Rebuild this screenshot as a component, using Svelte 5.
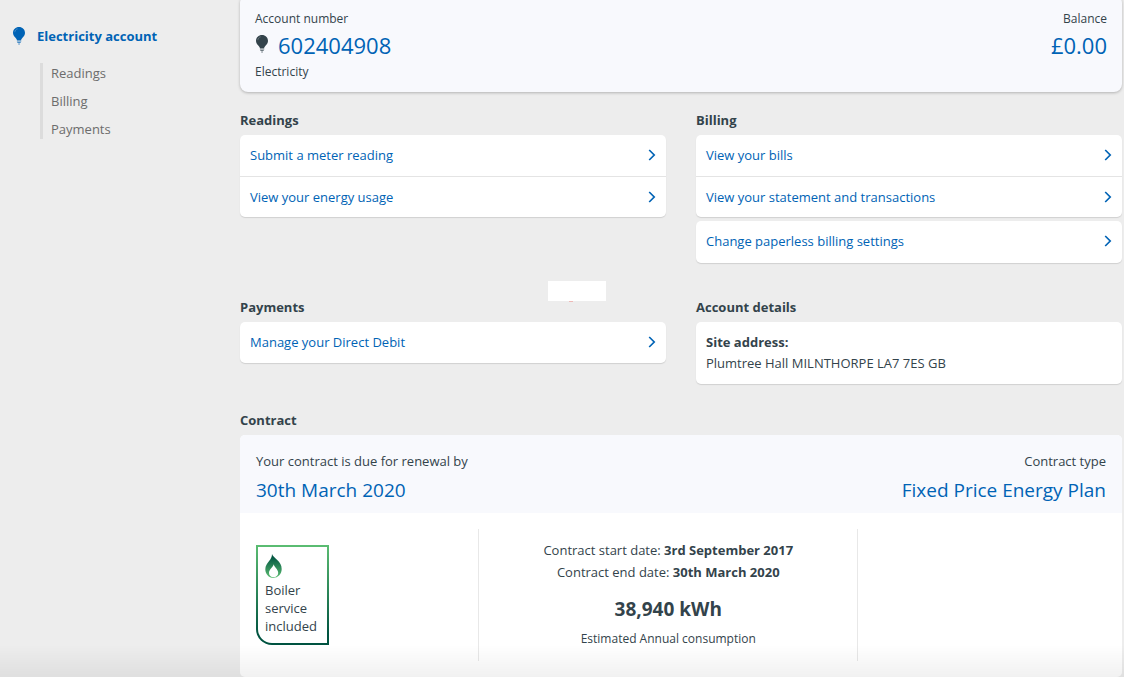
<script>
  const menu = ['Readings', 'Billing', 'Payments'];
</script>

{#snippet bulb()}
  <svg class="bulb" viewBox="0 0 12 18" width="12" height="18" aria-hidden="true">
    <path d="M6 0C2.600 0 0 2.500 0 6c0 2.400 1.600 3.700 2.900 5.200.6.700.9 1.300 1.100 2h4c.2-.7.5-1.300 1.100-2C10.400 9.700 12 8.400 12 6 12 2.500 9.400 0 6 0z" fill="currentColor" />
    <path d="M3.900 14h4.400M4.300 15.500h3.400M5.200 17h1.700" stroke="currentColor" stroke-width="1.100" opacity=".7" />
    <path d="M1.800 5.200C1.900 3.400 3 2.200 4.700 1.800" fill="none" stroke="#fff" stroke-width=".6" opacity=".4" />
  </svg>
{/snippet}

{#snippet row(label)}
  <a class="row" href="#top">
    <span>{label}</span>
    <svg viewBox="0 0 8 12" width="8" height="12" aria-hidden="true">
      <path d="M1.200 1l5 5-5 5" fill="none" stroke="currentColor" stroke-width="1.700" />
    </svg>
  </a>
{/snippet}

<div class="page">
  <nav class="side">
    <a class="account" href="#top">{@render bulb()}<span>Electricity account</span></a>
    <div class="menu">
      {#each menu as item}
        <a href="#top">{item}</a>
      {/each}
    </div>
  </nav>

  <main>
    <section class="summary">
      <div>
        <p class="small">Account number</p>
        <p class="number">{@render bulb()}<a href="#top">602404908</a></p>
        <p class="small">Electricity</p>
      </div>
      <div class="right">
        <p class="small">Balance</p>
        <p class="number">£0.00</p>
      </div>
    </section>

    <div class="columns">
      <section>
        <h2>Readings</h2>
        <div class="list">
          {@render row('Submit a meter reading')}
          {@render row('View your energy usage')}
        </div>
      </section>
      <section>
        <h2>Billing</h2>
        <div class="list">
          {@render row('View your bills')}
          {@render row('View your statement and transactions')}
        </div>
        <div class="list extra">
          {@render row('Change paperless billing settings')}
        </div>
      </section>
      <section class="payments">
        <h2>Payments</h2>
        <div class="list">
          {@render row('Manage your Direct Debit')}
        </div>
        <div class="patch"></div>
      </section>
      <section>
        <h2>Account details</h2>
        <div class="list details">
          <strong>Site address:</strong>
          <p>Plumtree Hall MILNTHORPE LA7 7ES GB</p>
        </div>
      </section>
    </div>

    <section class="contract">
      <h2>Contract</h2>
      <div class="card">
        <header>
          <div>
            <p>Your contract is due for renewal by</p>
            <p class="value">30th March 2020</p>
          </div>
          <div class="right">
            <p>Contract type</p>
            <p class="value">Fixed Price Energy Plan</p>
          </div>
        </header>
        <div class="body">
          <div class="cell">
            <div class="badge">
              <svg viewBox="0 0 18 24" width="18" height="24" aria-hidden="true">
                <defs>
                  <linearGradient id="flame" x1="0" y1="0" x2="0" y2="1">
                    <stop offset="0.100" stop-color="#005340" />
                    <stop offset="1" stop-color="#5bbd72" />
                  </linearGradient>
                </defs>
                <path fill="url(#flame)" fill-rule="evenodd" d="M7 0c.6 2 2.800 3.700 5 5.800 2.900 2.800 4.700 5.300 4.700 9.200 0 5-3.600 8.800-8.300 8.800S.300 20 .300 15.200c0-3.700 1.900-5.800 4-8.500C6 4.600 7 2.700 7 0zM8.700 10.200c-.4 2.500-4.700 5-4.700 8.700 0 2.600 2 4.200 4.500 4.200s4.700-1.600 4.700-4.200c0-3.700-4.100-6.200-4.500-8.700z" />
              </svg>
              <span>Boiler service included</span>
            </div>
          </div>
          <div class="cell middle">
            <p>Contract start date: <strong>3rd September 2017</strong></p>
            <p>Contract end date: <strong>30th March 2020</strong></p>
            <p class="usage">38,940 kWh</p>
            <p class="small">Estimated Annual consumption</p>
          </div>
          <div class="cell"></div>
        </div>
      </div>
    </section>
  </main>
  <div class="fade"></div>
</div>

<style>
  :global(body) {
    background: #ededed;
    overflow: hidden;
  }
  .page {
    display: flex;
    font: 13px/22px 'Open Sans', 'Noto Sans', sans-serif;
    color: #33434b;
  }
  p, h2 { margin: 0; }
  a { color: #0063b5; text-decoration: none; }
  strong { font-weight: 700; }
  .side {
    flex: 0 0 240px;
    box-sizing: border-box;
    padding: 25px 12px;
  }
  .account {
    display: flex;
    gap: 12px;
    font-weight: 700;
  }
  .account .bulb { margin-left: 1px; margin-top: 2px; }
  .menu {
    display: grid;
    margin: 16px 0 0 28px;
    border-left: 3px solid #dcdcdc;
    padding-left: 8px;
    row-gap: 8px;
    line-height: 20px;
  }
  .menu a { color: #6c6c6c; }
  main {
    flex: 1;
    min-width: 0;
    padding-right: 2px;
  }
  .summary {
    display: flex;
    justify-content: space-between;
    margin-top: -5px;
    padding: 14px 15px 10px;
    border-radius: 8px;
    background: #f8f9fd;
    box-shadow: 0 1px 3px #00000040;
  }
  .right { text-align: right; }
  .small { font-size: 12px; line-height: 20px; }
  .number {
    display: flex;
    justify-content: flex-end;
    font-size: 22px;
    line-height: 33px;
    color: #0063b5;
  }
  .number .bulb { margin: 6px 10px 0 1px; color: #33434b; }
  .columns {
    display: grid;
    grid-template-columns: 1fr 1fr;
    column-gap: 30px;
    row-gap: 33px;
    margin-top: 17px;
  }
  h2 {
    font-size: 13px;
    line-height: 22px;
    padding-bottom: 4px;
  }
  .list {
    border-radius: 5px;
    background: #fff;
    box-shadow: 0 1px 1px #00000020;
  }
  .row {
    display: flex;
    align-items: center;
    justify-content: space-between;
    box-sizing: border-box;
    height: 41px;
    padding: 0 10px 1px;
  }
  .row + .row { border-top: 1px solid #e4e4e4; }
  .extra { margin-top: 4px; padding-bottom: 1px; }
  .list:not(.extra) .row:first-child:not(:last-child) { padding-bottom: 1px; }
  .payments { position: relative; }
  .patch {
    position: absolute;
    left: 308px;
    top: -15px;
    width: 58px;
    height: 20px;
    background: #fff;
  }
  .patch::after {
    content: '';
    position: absolute;
    left: 21px;
    top: 20px;
    width: 4px;
    height: 1px;
    background: #edb9b7;
  }
  .details { padding: 10px; line-height: 21px; }
  .contract { margin-top: 25px; }
  .card {
    border-radius: 5px;
    overflow: hidden;
    background: #fff;
  }
  .card header {
    display: flex;
    justify-content: space-between;
    padding: 15px 16px 5px;
    background: #f8f9fd;
  }
  .value {
    font-size: 19px;
    line-height: 36px;
    color: #0063b5;
  }
  .body {
    display: grid;
    grid-template-columns: 27fr 43fr 30fr;
    padding: 16px 0;
  }
  .cell + .cell { border-left: 1px solid #e8e8e8; }
  .badge {
    display: grid;
    align-content: start;
    row-gap: 3px;
    box-sizing: border-box;
    width: 73px;
    height: 100px;
    margin: 16px;
    padding: 7px 7px 0;
    border: 2px solid transparent;
    border-radius: 0 0 0 16px;
    background: linear-gradient(#fff, #fff) padding-box, linear-gradient(#5bbd72, #005340 90%) border-box;
    line-height: 18px;
  }
  .middle { text-align: center; padding-top: 10px; }
  .usage {
    margin: 11px 0 5px;
    font-size: 19px;
    line-height: 30px;
    font-weight: 700;
  }
  .fade {
    position: fixed;
    inset: auto 0 0 0;
    height: 32px;
    background: linear-gradient(#0000, #0000000e);
    pointer-events: none;
  }
</style>
